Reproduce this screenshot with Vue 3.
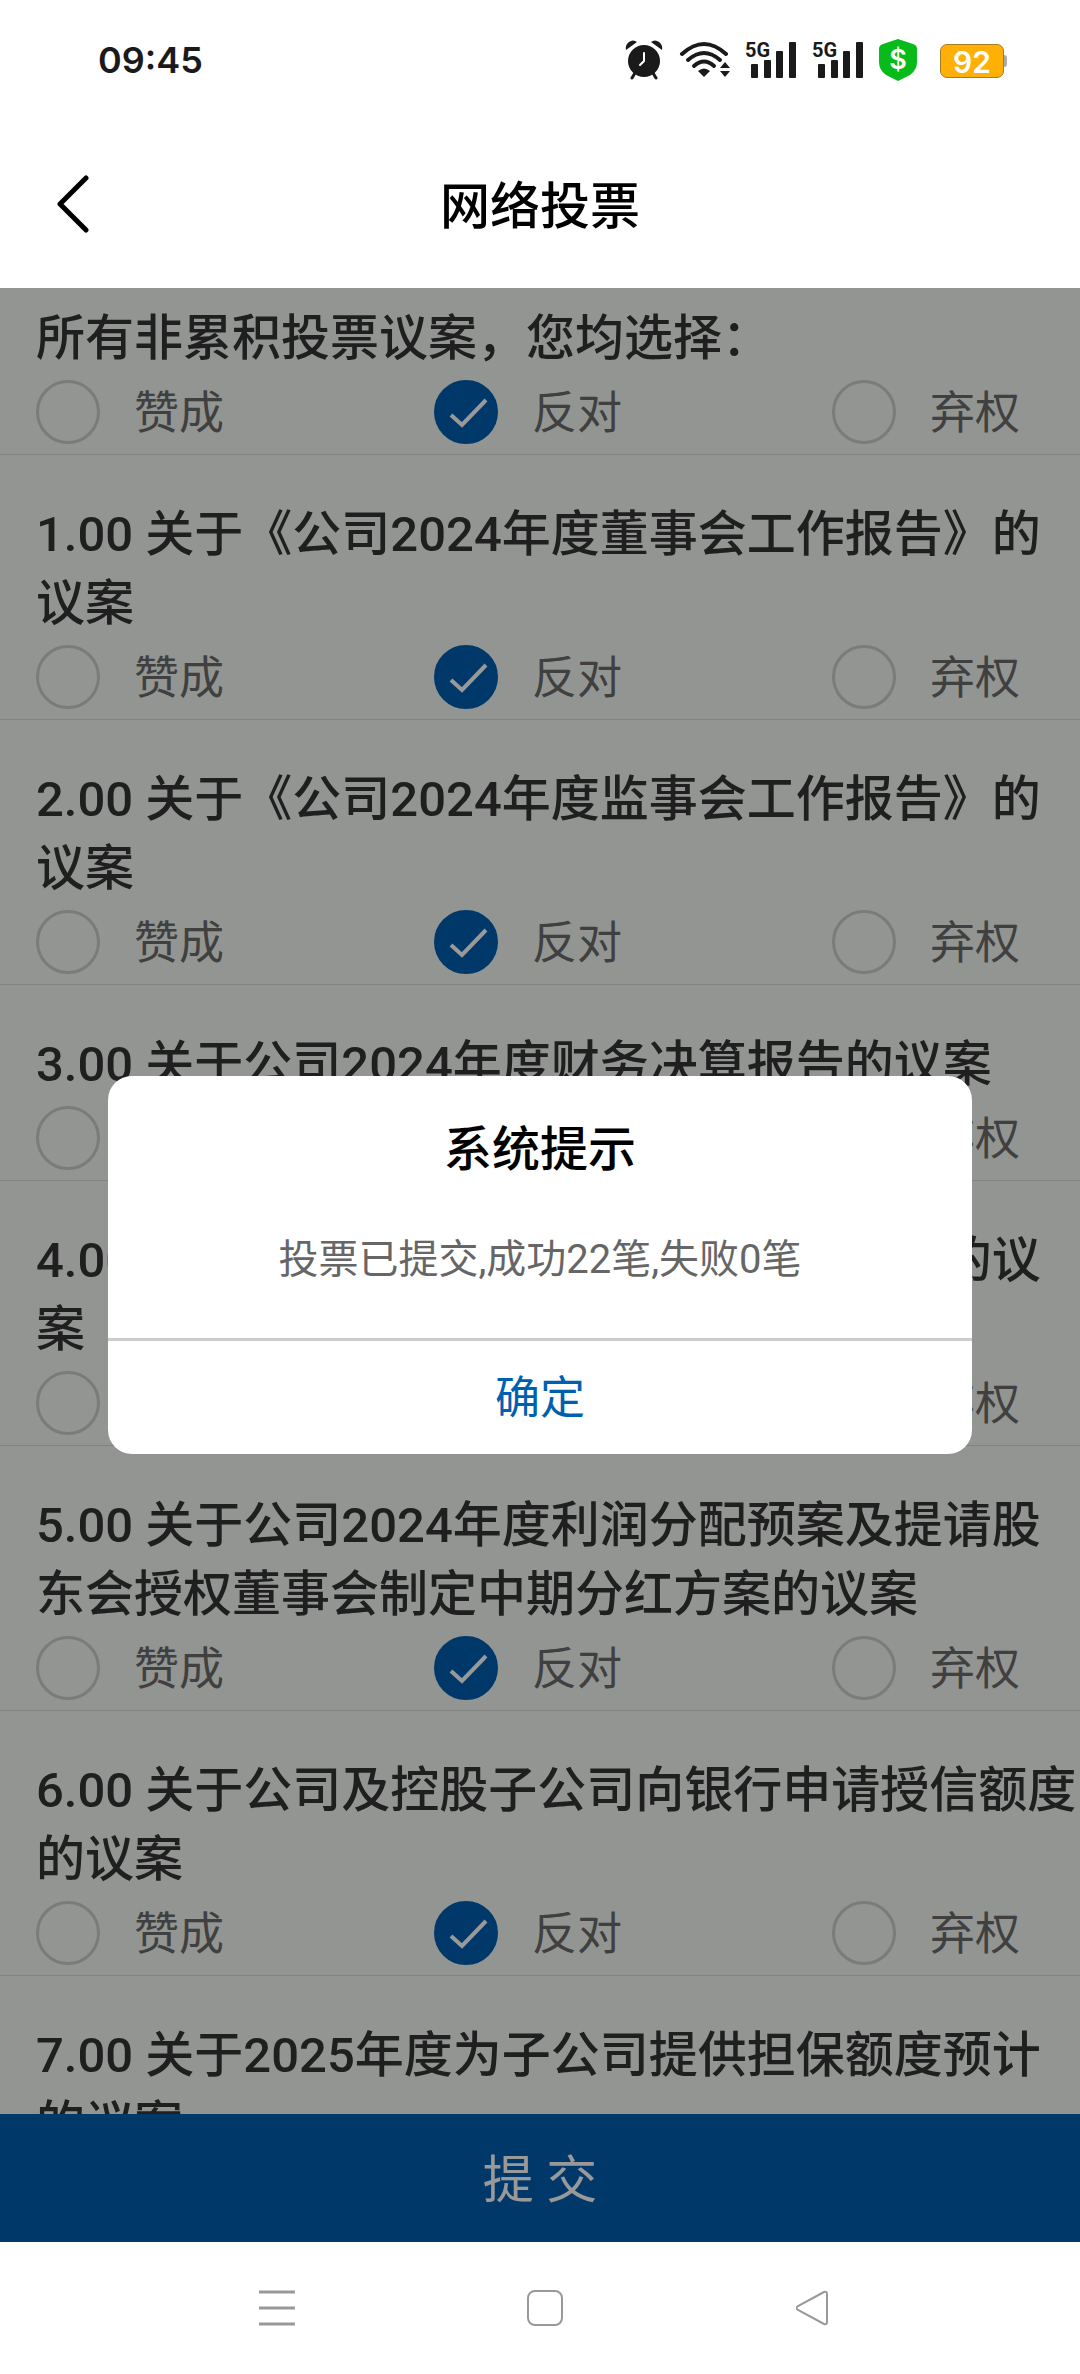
<script setup>
import { ref } from 'vue'

const options = [
  { value: 'for', label: '赞成' },
  { value: 'against', label: '反对' },
  { value: 'abstain', label: '弃权' }
]

const proposals = ref([
  { id: 'all', title: '所有非累积投票议案，您均选择：', vote: 'against' },
  { id: '1', title: '1.00 关于《公司2024年度董事会工作报告》的议案', vote: 'against' },
  { id: '2', title: '2.00 关于《公司2024年度监事会工作报告》的议案', vote: 'against' },
  { id: '3', title: '3.00 关于公司2024年度财务决算报告的议案', vote: 'against' },
  { id: '4', title: '4.00 关于公司2024年年度报告全文及摘要的议案', vote: 'against' },
  { id: '5', title: '5.00 关于公司2024年度利润分配预案及提请股东会授权董事会制定中期分红方案的议案', vote: 'against' },
  { id: '6', title: '6.00 关于公司及控股子公司向银行申请授信额度的议案', vote: 'against' },
  { id: '7', title: '7.00 关于2025年度为子公司提供担保额度预计的议案', vote: 'against' }
])

const showDialog = ref(true)

const setVote = (proposal, value) => {
  proposal.vote = value
  // the first row applies its choice to every proposal
  if (proposal.id === 'all') {
    proposals.value.forEach((item) => {
      item.vote = value
    })
  }
}
</script>

<template>
  <div class="screen" lang="zh-CN">
    <div class="status-bar">
      <span class="clock">09:45</span>
      <div class="status-icons">
        <svg width="38" height="40" viewBox="0 0 38 40">
          <circle cx="19" cy="21" r="16" fill="#1a1a1a" />
          <path d="M1 10 Q0 5 4 2 Q8 -1 12 2 Z M37 10 Q38 5 34 2 Q30 -1 26 2 Z" fill="#1a1a1a" />
          <path d="M10 33 L7 38 M28 33 L31 38" stroke="#1a1a1a" stroke-width="3" stroke-linecap="round" />
          <path d="M19 13 V21 L15 25" fill="none" stroke="#fff" stroke-width="2" stroke-linecap="round" />
        </svg>
        <svg width="52" height="40" viewBox="0 0 52 40">
          <g fill="none" stroke="#1a1a1a" stroke-width="4" stroke-linecap="round">
            <path d="M4 14 Q26 -6 48 14" />
            <path d="M10 20 Q26 6 42 20" />
            <path d="M16 26 Q26 17 36 26" />
          </g>
          <path d="M20 31 Q26 26 32 31 L26 37 Z" fill="#1a1a1a" />
          <path d="M42 28 L47 22 L52 28 Z M42 31 H52 L47 37 Z" fill="#1a1a1a" />
        </svg>
        <svg v-for="sim in 2" :key="sim" class="signal" width="52" height="40" viewBox="0 0 52 40">
          <text x="0" y="17" class="signal-text">5G</text>
          <g fill="#1a1a1a">
            <rect x="6" y="24" width="7" height="14" rx="1" />
            <rect x="19" y="20" width="7" height="18" rx="1" />
            <rect x="31" y="11" width="7" height="27" rx="1" />
            <rect x="44" y="2" width="7" height="36" rx="1" />
          </g>
        </svg>
        <svg width="38" height="42" viewBox="0 0 38 42">
          <path d="M19 0 L34 5 Q38 6 38 10 V23 Q38 31 31 36 L19 42 L7 36 Q0 31 0 23 V10 Q0 6 4 5 Z" fill="#06bb1a" />
          <text x="19" y="30" text-anchor="middle" class="shield-text">$</text>
        </svg>
        <div class="battery">92</div>
      </div>
    </div>

    <header class="title-bar">
      <button class="back" type="button" aria-label="返回">
        <svg width="34" height="60" viewBox="0 0 34 60">
          <path d="M31 4 L5 30 L31 56" fill="none" stroke="#000" stroke-width="5" stroke-linecap="round" stroke-linejoin="round" />
        </svg>
      </button>
      <h1>网络投票</h1>
    </header>

    <main class="content">
      <div class="list">
        <fieldset v-for="proposal in proposals" :key="proposal.id" class="proposal">
          <legend>{{ proposal.title }}</legend>
          <div class="options">
            <label v-for="option in options" :key="option.value" class="option">
              <span class="mark">
                <input
                  type="radio"
                  :name="'vote-' + proposal.id"
                  :value="option.value"
                  :checked="proposal.vote === option.value"
                  @change="setVote(proposal, option.value)"
                />
                <svg v-if="proposal.vote === option.value" width="64" height="64" viewBox="0 0 64 64">
                  <path d="M17 35 L28 45 L52 20" fill="none" stroke="#fff" stroke-width="4" />
                </svg>
              </span>
              <span class="option-text">{{ option.label }}</span>
            </label>
          </div>
        </fieldset>
      </div>
      <button class="submit" type="button" @click="showDialog = true">提 交</button>

      <div v-if="showDialog" class="overlay">
        <div class="dialog" role="dialog" aria-modal="true" aria-labelledby="dialog-title">
          <h2 id="dialog-title">系统提示</h2>
          <p>投票已提交,成功22笔,失败0笔</p>
          <button type="button" @click="showDialog = false">确定</button>
        </div>
      </div>
    </main>

    <nav class="nav-bar">
      <button type="button" aria-label="最近任务">
        <svg width="36" height="36" viewBox="0 0 36 36">
          <path d="M0 2 H36 M0 18 H36 M0 34 H36" stroke="#999" stroke-width="3" />
        </svg>
      </button>
      <button type="button" aria-label="主屏幕">
        <svg width="36" height="36" viewBox="0 0 36 36">
          <rect x="1" y="1" width="34" height="34" rx="7" fill="none" stroke="#999" stroke-width="2" />
        </svg>
      </button>
      <button type="button" aria-label="返回上一级">
        <svg width="36" height="36" viewBox="0 0 36 36">
          <path d="M28 2 L2 16 Q-1 18 2 20 L28 34 Q31 35 31 32 V4 Q31 1 28 2 Z" fill="none" stroke="#999" stroke-width="2" />
        </svg>
      </button>
    </nav>
  </div>
</template>

<style>
body {
  margin: 0;
  background: #fff;
}
</style>

<style scoped>
.screen {
  height: 100vh;
  display: flex;
  flex-direction: column;
  background: #fff;
  font-family: Roboto, 'Noto Sans CJK SC', sans-serif;
}

button {
  padding: 0;
  border: none;
  background: transparent;
  font-family: inherit;
  cursor: pointer;
}

svg {
  display: block;
}

.status-bar {
  flex: none;
  height: 120px;
  padding: 0 72px 0 98px;
  display: flex;
  align-items: center;
  justify-content: space-between;
}

.clock {
  font-family: Inter, sans-serif;
  font-size: 36px;
  font-weight: 600;
  color: #1a1a1a;
}

.status-icons {
  display: flex;
  align-items: center;
  gap: 15px;
}

.signal {
  overflow: visible;
}

.signal-text {
  font-family: Roboto, sans-serif;
  font-size: 20px;
  font-weight: 700;
  fill: #1a1a1a;
}

.shield-text {
  font-family: Inter, sans-serif;
  font-size: 27px;
  font-weight: 600;
  fill: #fff;
}

.battery {
  position: relative;
  box-sizing: border-box;
  width: 64px;
  height: 34px;
  margin: 2px 4px 0 8px;
  border: 1px solid #a87b1c;
  border-radius: 7px;
  background: #ffb006;
  color: #fff;
  font-family: Inter, sans-serif;
  font-size: 30px;
  font-weight: 600;
  line-height: 34px;
  text-align: center;
}

.battery::after {
  content: '';
  position: absolute;
  top: 10px;
  right: -4px;
  width: 3px;
  height: 12px;
  border-radius: 0 3px 3px 0;
  background: #aaa;
}

.title-bar {
  flex: none;
  height: 168px;
  padding: 0 55px;
  display: grid;
  grid-template-columns: 1fr auto 1fr;
  align-items: center;
}

.back {
  justify-self: start;
}

h1 {
  margin: 0;
  padding-bottom: 4px;
  font-size: 50px;
  font-weight: 500;
  color: #000;
}

.content {
  position: relative;
  flex: 1;
  min-height: 0;
  display: flex;
  flex-direction: column;
  background: #f5f8f6;
}

.list {
  flex: 1;
  min-height: 0;
  overflow: hidden;
}

.proposal {
  min-width: 0;
  margin: 0;
  padding: 45px 0 10px;
  border: none;
  border-bottom: 1px solid #d8d8d8;
}

.proposal:first-child {
  padding-top: 16px;
}

legend {
  float: left;
  width: 100%;
  box-sizing: border-box;
  margin-bottom: 7px;
  padding: 0 0 0 36px;
  font-size: 49px;
  font-weight: 500;
  line-height: 69px;
  color: #353535;
}

.options {
  clear: both;
  padding: 0 60px 0 36px;
  display: flex;
  justify-content: space-between;
}

.option {
  display: flex;
  align-items: center;
  gap: 34px;
}

.option-text {
  padding-top: 4px;
  font-size: 45px;
  line-height: 60px;
  color: #6c6c6c;
}

.mark {
  display: grid;
}

.mark input,
.mark svg {
  grid-area: 1 / 1;
}

.mark input {
  appearance: none;
  width: 64px;
  height: 64px;
  margin: 0;
  border: 3px solid #cdcdcd;
  border-radius: 50%;
}

.mark input:checked {
  border-color: #0060b0;
  background: #0060b0;
}

.mark svg {
  pointer-events: none;
}

.submit {
  flex: none;
  height: 128px;
  padding-bottom: 4px;
  background: #0060b0;
  color: #fff;
  font-size: 51px;
}

.overlay {
  position: absolute;
  inset: 0;
  display: flex;
  align-items: center;
  justify-content: center;
  background: rgba(0, 0, 0, 0.4);
}

.dialog {
  width: 80%;
  overflow: hidden;
  border-radius: 24px;
  background: #fff;
  text-align: center;
}

.dialog h2 {
  margin: 44px 0 56px;
  font-size: 48px;
  font-weight: 500;
  line-height: 60px;
  color: #000;
}

.dialog p {
  margin: 0 0 54px;
  font-size: 40px;
  line-height: 48px;
  color: #666;
}

.dialog button {
  width: 100%;
  height: 116px;
  padding-bottom: 6px;
  border-top: 3px solid #ccc;
  font-size: 45px;
  color: #0060b0;
}

.nav-bar {
  flex: none;
  height: 132px;
  padding: 0 23% 0 24%;
  display: flex;
  align-items: center;
  justify-content: space-between;
}
</style>
